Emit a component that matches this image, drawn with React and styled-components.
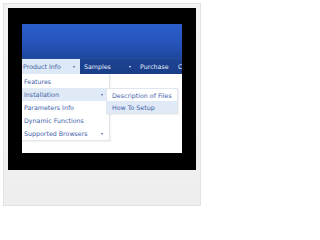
import React from "react";
import styled, { createGlobalStyle } from "styled-components";

const GlobalStyle = createGlobalStyle`
  html, body {
    margin: 0;
    padding: 0;
    background: #ffffff;
    font-family: "DejaVu Sans", Verdana, sans-serif;
  }
`;

const barItems = [
  { label: "Product Info", arrow: true, active: true, width: 58 },
  { label: "Samples", arrow: true, width: 56 },
  { label: "Purchase", width: 38 },
  { label: "Contact Us", width: 40 },
];

const subItems = [
  { label: "Features" },
  { label: "Installation", arrow: true, active: true },
  { label: "Parameters Info" },
  { label: "Dynamic Functions" },
  { label: "Supported Browsers", arrow: true },
];

const subSubItems = [
  { label: "Description of Files" },
  { label: "How To Setup", active: true },
];

function App() {
  return (
    <Page>
      <GlobalStyle />
      <Frame>
        <BlackPanel>
          <Demo>
            <Header />
            <MenuBar>
              {barItems.map((item) => (
                <BarItem key={item.label} $active={item.active} $width={item.width}>
                  <span>{item.label}</span>
                  {item.arrow && <Arrow $light={!item.active} />}
                </BarItem>
              ))}
            </MenuBar>
            <Content>
              <SubMenu>
                {subItems.map((item) => (
                  <SubItem key={item.label} $active={item.active}>
                    <span>{item.label}</span>
                    {item.arrow && <Arrow />}
                  </SubItem>
                ))}
              </SubMenu>
              <SubSubMenu>
                {subSubItems.map((item) => (
                  <SubItem key={item.label} $active={item.active} $small>
                    <span>{item.label}</span>
                  </SubItem>
                ))}
              </SubSubMenu>
            </Content>
          </Demo>
        </BlackPanel>
      </Frame>
    </Page>
  );
}
export default App;

const Page = styled.div`
  width: 204px;
  height: 209px;
  padding: 3px;
  box-sizing: border-box;
  background: #ffffff;
`;

const Frame = styled.div`
  width: 198px;
  height: 203px;
  box-sizing: border-box;
  border: 1px solid #e2e2e2;
  background: linear-gradient(#f3f3f3, #eeeeee);
  padding: 4px;
`;

const BlackPanel = styled.div`
  width: 188px;
  height: 162px;
  box-sizing: border-box;
  background: #000000;
  padding: 16px 14px 17px 14px;
`;

const Demo = styled.div`
  display: flex;
  flex-direction: column;
  width: 160px;
  height: 129px;
  overflow: hidden;
  background: #ffffff;
`;

const Header = styled.div`
  height: 34px;
  flex-shrink: 0;
  background: linear-gradient(#2c5fcb, #2653b8 60%, #1f479f);
`;

const MenuBar = styled.div`
  display: flex;
  height: 16px;
  flex-shrink: 0;
  background: linear-gradient(#1d4594, #1a3d88);
  border-top: 1px solid #244f9f;
  box-sizing: border-box;
  white-space: nowrap;
`;

const BarItem = styled.div`
  display: flex;
  align-items: center;
  justify-content: space-between;
  flex-shrink: 0;
  width: ${(p) => p.$width}px;
  box-sizing: border-box;
  padding: 0 5px 0 ${(p) => (p.$active ? 1 : 4)}px;
  font-size: 6.3px;
  color: ${(p) => (p.$active ? "#3c5ca6" : "#e6edfb")};
  background: ${(p) => (p.$active ? "#dde9f7" : "transparent")};
`;

const Arrow = styled.i`
  display: block;
  width: 0;
  height: 0;
  border-left: 1.5px solid transparent;
  border-right: 1.5px solid transparent;
  border-top: 2.5px solid ${(p) => (p.$light ? "#e6edfb" : "#3c5ca6")};
`;

const Content = styled.div`
  position: relative;
  flex: 1;
  background: #ffffff;
`;

const SubMenu = styled.div`
  position: absolute;
  left: 0;
  top: 0;
  width: 88px;
  box-sizing: border-box;
  background: #ffffff;
  border: 1px solid #e3e6ec;
  border-left: none;
  border-top: none;
  box-shadow: 1px 1px 1px rgba(0, 0, 0, 0.05);
  padding-top: 1px;
`;

const SubSubMenu = styled.div`
  position: absolute;
  left: 84px;
  top: 14px;
  width: 72px;
  box-sizing: border-box;
  background: #ffffff;
  border: 1px solid #e0e5ee;
  box-shadow: 1px 1px 1px rgba(0, 0, 0, 0.06);
`;

const SubItem = styled.div`
  display: flex;
  align-items: center;
  justify-content: space-between;
  height: ${(p) => (p.$small ? 12 : 13)}px;
  padding: 0 6px 0 ${(p) => (p.$small ? 5 : 2)}px;
  font-size: 6.3px;
  white-space: nowrap;
  color: #3e5ea8;
  background: ${(p) => (p.$active ? "#e0eaf7" : "transparent")};
`;
